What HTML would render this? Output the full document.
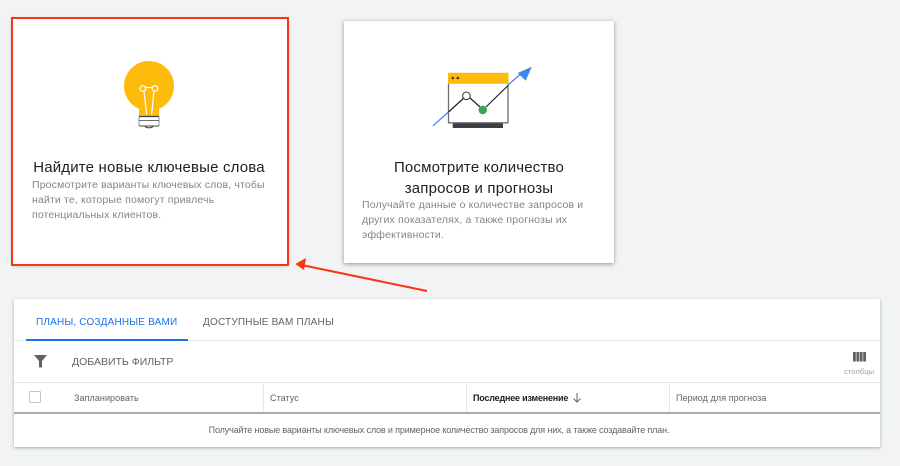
<!DOCTYPE html>
<html lang="ru"><head><meta charset="utf-8">
<style>
html,body{margin:0;padding:0}
body{width:900px;height:466px;background:#f1f3f4;position:relative;overflow:hidden;font-family:"Liberation Sans",Arial,sans-serif}
.a{position:absolute;white-space:nowrap}
.card{position:absolute;background:#fff;box-shadow:0 1px 4px rgba(60,64,67,.55)}
.t{font-size:15px;color:#202124;letter-spacing:.18px;line-height:21px;text-align:center}
.d{font-size:10.5px;color:#80868b;letter-spacing:.15px;line-height:15px}
.g{background:#e6e7e8;position:absolute}
.h{font-size:9px;color:#5f6368;letter-spacing:.07px;line-height:12px}
</style></head><body>

<div class="card" style="left:13px;top:19px;width:274px;height:245px"></div>
<div class="a" style="left:11px;top:17px;width:274px;height:245px;border:2px solid #fb3413"></div>
<svg class="a" style="left:110px;top:50px" width="80" height="90" viewBox="110 50 80 90">
<path d="M139 116V108.900A25 25 0 1 1 159 108.900V116Z" fill="#fdbb0c"/>
<g fill="none" stroke="#fff" stroke-width="1.200">
<circle cx="142.800" cy="88.500" r="2.800"/><circle cx="155" cy="88.500" r="2.800"/>
<path d="M145 87.500H153M144 91.500L146.700 114.500M153.800 91.500L151.700 114.500"/></g>
<rect x="139" y="117" width="20" height="9" fill="#fff"/>
<path d="M145 126.500A4.500 2.400 0 0 0 153 126.500" fill="#fff" stroke="#3c4043" stroke-width="1"/>
<path d="M139 116.500H159" stroke="#3c4043" stroke-width="1.200"/>
<path d="M139 120.500H159" stroke="#6b6f73" stroke-width="1"/>
<path d="M139 126H159" stroke="#3c4043" stroke-width="1"/>
<path d="M139 116.500V126M159 116.500V126" stroke="#5f6368" stroke-width=".7"/>
</svg>
<div class="a t" style="left:13px;top:157px;width:272px">Найдите новые ключевые слова</div>
<div class="a d" style="left:32px;top:178px">Просмотрите варианты ключевых слов, чтобы<br>найти те, которые помогут привлечь<br>потенциальных клиентов.</div>

<div class="card" style="left:344px;top:21px;width:270px;height:242px"></div>
<svg class="a" style="left:425px;top:60px" width="115" height="75" viewBox="425 60 115 75">
<path d="M448.500 83V122.800H508V83" fill="#fff" stroke="#6b6f73" stroke-width="1.300"/>
<rect x="448" y="72.800" width="60.500" height="11" fill="#fdbb0c"/>
<rect x="452.700" y="123.400" width="50.300" height="4.600" fill="#3c4043"/>
<circle cx="452.800" cy="78" r="1.300" fill="#3c4043"/><circle cx="457.800" cy="78" r="1.300" fill="#3c4043"/>
<path d="M433 125.800L448.500 112" stroke="#4285f4" stroke-width="1.300"/>
<path d="M448.500 112L465 97M470 98L480 107M486 107L508 85.500" stroke="#202124" stroke-width="1.200" fill="none"/>
<path d="M508 85L524 71" stroke="#4285f4" stroke-width="1.300"/>
<path d="M531.800 66.700L517.700 73L525.700 80.700Z" fill="#4285f4"/>
<circle cx="466.400" cy="95.800" r="3.800" fill="#fff" stroke="#3c4043" stroke-width="1.100"/>
<circle cx="482.700" cy="110" r="4.200" fill="#34a853"/>
</svg>
<div class="a t" style="left:344px;top:157px;width:270px">Посмотрите количество<br>запросов и прогнозы</div>
<div class="a d" style="left:362px;top:198px">Получайте данные о количестве запросов и<br>других показателях, а также прогнозы их<br>эффективности.</div>

<svg class="a" style="left:280px;top:250px" width="160" height="50" viewBox="280 250 160 50">
<path d="M427 291L304 265.500" stroke="#fb3413" stroke-width="2"/>
<path d="M295.300 264L306 258L304 270Z" fill="#fb3413"/>
</svg>

<div class="card" style="left:14px;top:299px;width:866px;height:148px;box-shadow:0 1px 3px rgba(60,64,67,.4)"></div>
<div class="a" style="left:36px;top:316px;font-size:10px;color:#1a73e8;letter-spacing:.18px;line-height:13px">ПЛАНЫ, СОЗДАННЫЕ ВАМИ</div>
<div class="a" style="left:203px;top:316px;font-size:10px;color:#5f6368;letter-spacing:.2px;line-height:13px">ДОСТУПНЫЕ ВАМ ПЛАНЫ</div>
<div class="g" style="left:14px;top:340px;width:866px;height:1px"></div>
<div class="a" style="left:26px;top:339px;width:162px;height:1.500px;background:#1a73e8"></div>
<svg class="a" style="left:34px;top:355px" width="13" height="13" viewBox="0 0 13 13"><path d="M0 0H13L8 6V12.500H5V6Z" fill="#5f6368"/></svg>
<div class="a" style="left:72px;top:356px;font-size:10.500px;color:#5f6368;line-height:13px">ДОБАВИТЬ ФИЛЬТР</div>
<svg class="a" style="left:853px;top:352px" width="13" height="10" viewBox="0 0 13 10"><path d="M0 0H2.800V9.500H0ZM3.400 0H6.200V9.500H3.400ZM6.800 0H9.600V9.500H6.800ZM10.200 0H13V9.500H10.200Z" fill="#5f6368"/></svg>
<div class="a" style="left:844px;top:367px;font-size:7.500px;color:#9aa0a6;letter-spacing:.1px;line-height:10px">столбцы</div>
<div class="g" style="left:14px;top:382px;width:866px;height:1px"></div>
<div class="a" style="left:29px;top:391px;width:10px;height:10px;border:1px solid #c4c7ca;border-radius:1px"></div>
<div class="a h" style="left:74px;top:391.500px">Запланировать</div>
<div class="g" style="left:263px;top:383px;width:1px;height:29px"></div>
<div class="a h" style="left:270px;top:391.500px">Статус</div>
<div class="g" style="left:466px;top:383px;width:1px;height:29px"></div>
<div class="a h" style="left:473px;top:391.500px;color:#202124;font-weight:bold;letter-spacing:-.2px">Последнее изменение</div>
<svg class="a" style="left:572px;top:392px" width="10" height="11" viewBox="0 0 10 11"><path d="M5 1V10M1.500 6.500L5 10L8.500 6.500" fill="none" stroke="#5f6368"/></svg>
<div class="g" style="left:669px;top:383px;width:1px;height:29px"></div>
<div class="a h" style="left:676px;top:391.500px">Период для прогноза</div>
<div class="a" style="left:14px;top:412px;width:866px;height:2px;background:#a9abad"></div>
<div class="a h" style="left:6px;top:424px;width:866px;text-align:center;letter-spacing:-.14px">Получайте новые варианты ключевых слов и примерное количество запросов для них, а также создавайте план.</div>
</body></html>
